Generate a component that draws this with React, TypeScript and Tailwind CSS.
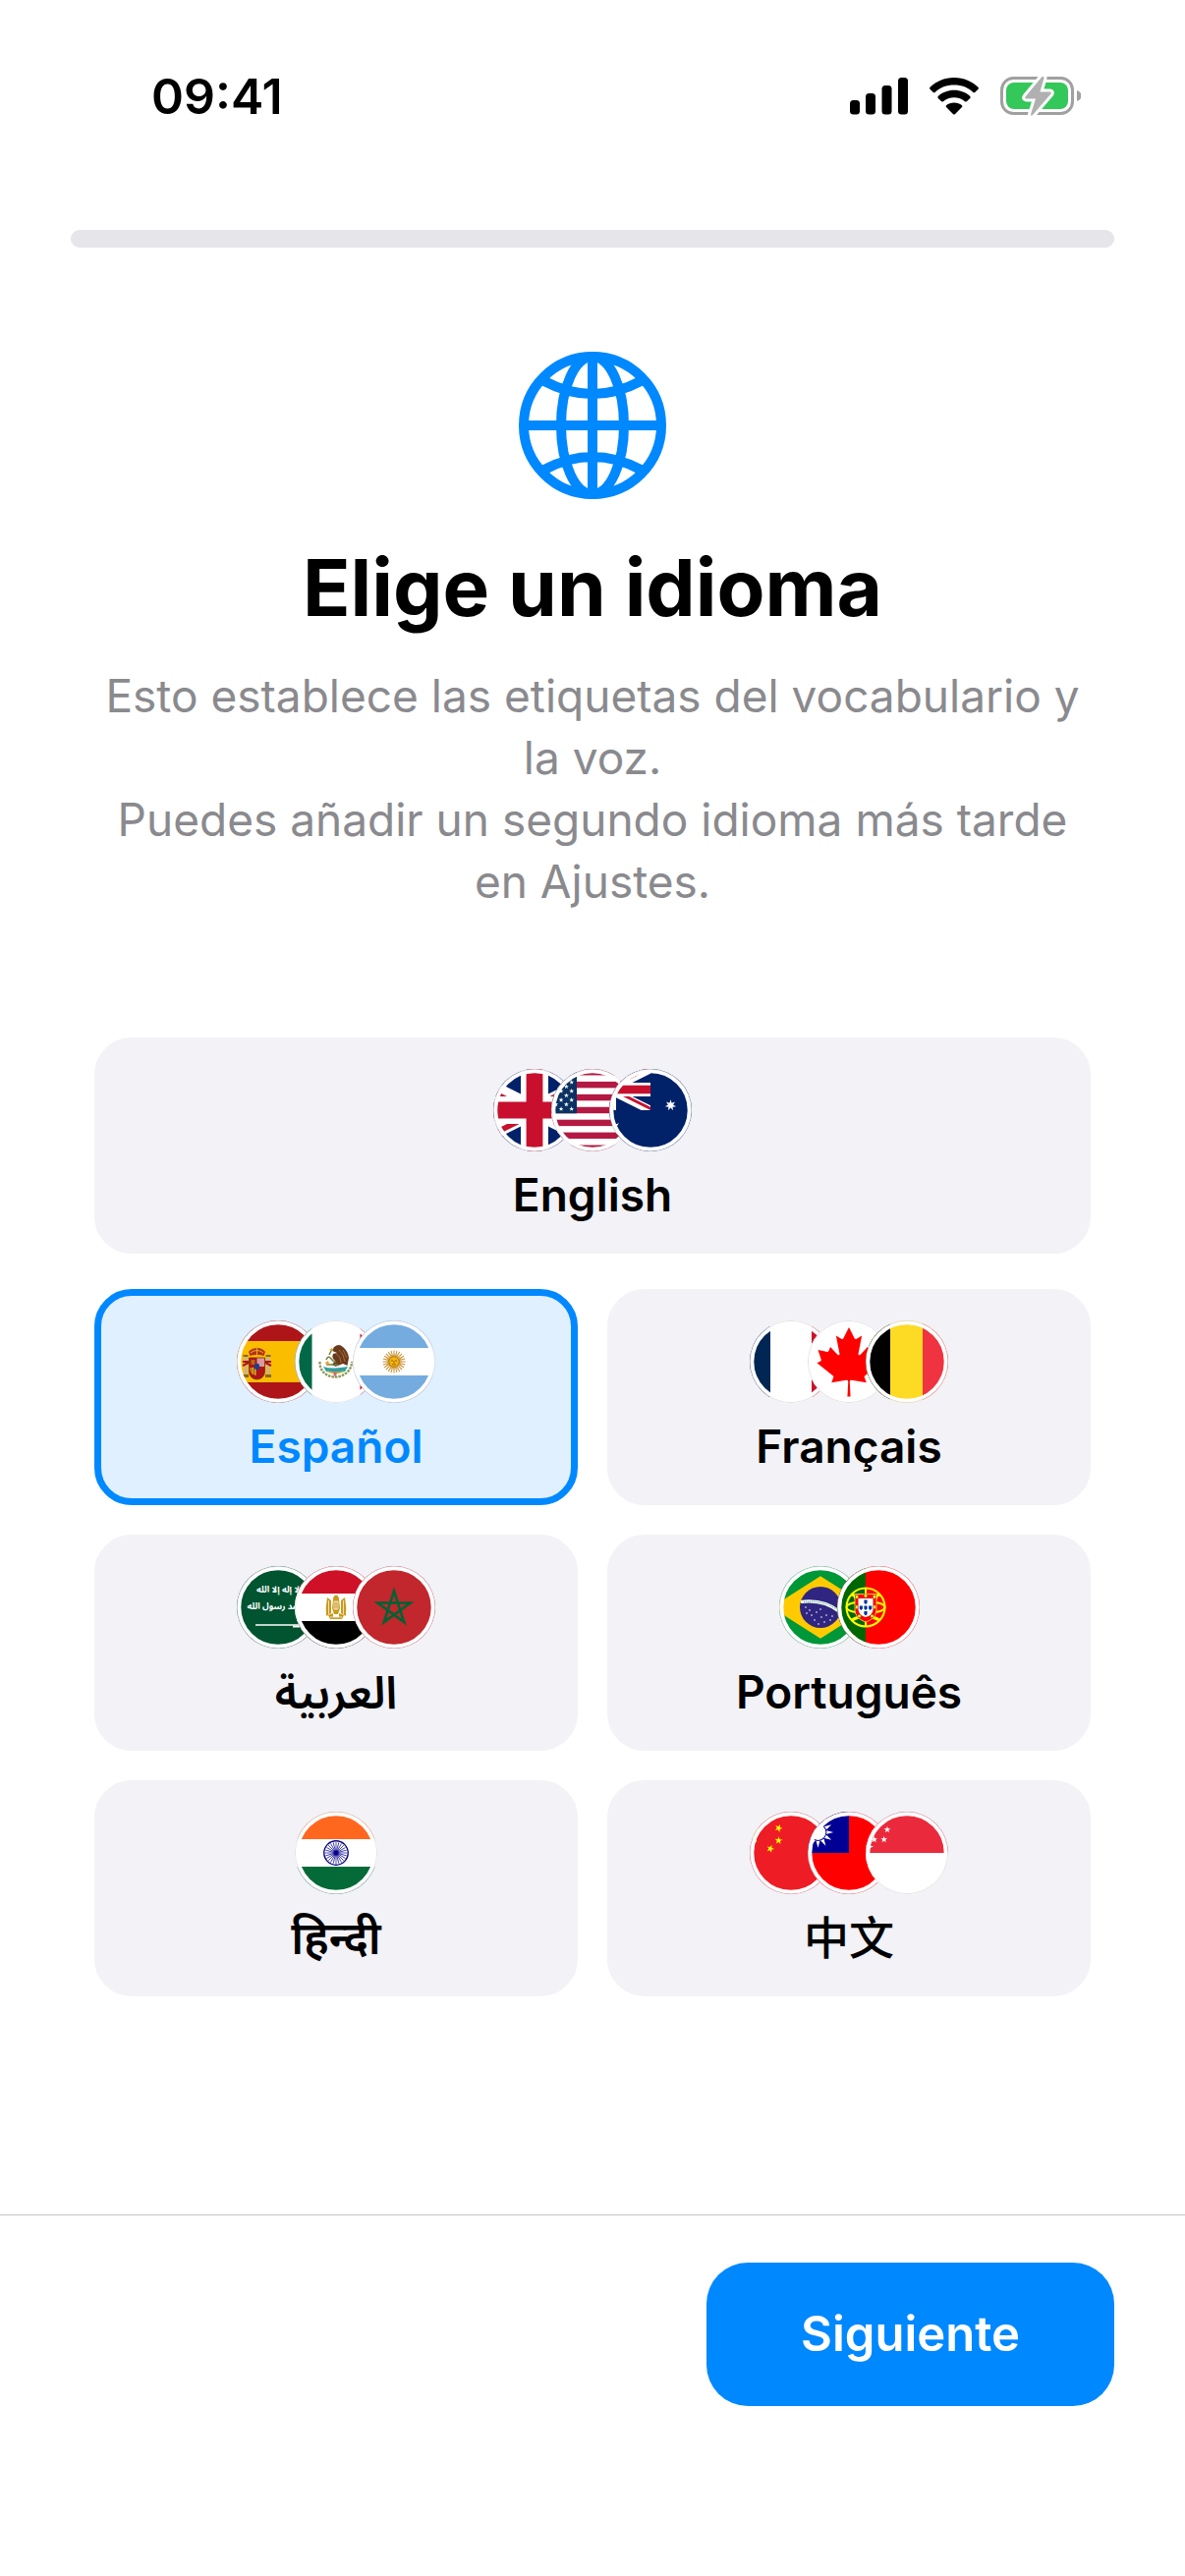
import { useState } from "react";
import type { ReactNode } from "react";

interface Language {
  id: string;
  label: string;
  flags: FlagName[];
  rtl?: boolean;
}

// n-pointed star, first point straight up (plus rot degrees)
function star(cx: number, cy: number, r: number, inner = 0.382, n = 5, rot = 0) {
  const pts: string[] = [];
  for (let i = 0; i < n * 2; i++) {
    const a = (Math.PI / n) * i + ((rot - 90) * Math.PI) / 180;
    const d = i % 2 ? r * inner : r;
    pts.push(`${(cx + d * Math.cos(a)).toFixed(2)},${(cy + d * Math.sin(a)).toFixed(2)}`);
  }
  return pts.join(" ");
}

const range = (n: number) => Array.from({ length: n }, (_, i) => i);

// Union Jack on a 60x30 grid
function UnionJack() {
  return (
    <>
      <path fill="#012169" d="M0 0h60v30H0z" />
      <path stroke="#fff" strokeWidth="6" d="m0 0 60 30M60 0 0 30" />
      <path
        fill="#c8102e"
        d="M0 0l20 10h-4.500L0 2.240zM60 0L40 10h-4.500L55.500 0zM60 30L40 20h4.500L60 27.760zM0 30l20-10h4.500L4.500 30z"
      />
      <path stroke="#fff" strokeWidth="10" d="M30 0v30M0 15h60" />
      <path stroke="#c8102e" strokeWidth="6" d="M30 0v30M0 15h60" />
    </>
  );
}

// Every flag is drawn on an 84x84 canvas, 84 being the full flag height
const flagArt = {
  gb: (
    <g transform="translate(-42 0) scale(2.8)">
      <UnionJack />
    </g>
  ),
  us: (
    <>
      <path fill="#fff" d="M0 0h84v84H0z" />
      {range(7).map((i) => (
        <rect key={i} y={i * 12.92} width="84" height="6.46" fill="#b31942" />
      ))}
      <path fill="#0a3161" d="M0 0h26v45.2H0z" />
      {range(9).map((row) =>
        range(row % 2 ? 5 : 6).map((col) => (
          <polygon
            key={`${row}-${col}`}
            fill="#fff"
            points={star(-32.5 + (row % 2 ? 5.32 : 0) + col * 10.64, 4.52 * (row + 1), 2.6)}
          />
        ))
      )}
    </>
  ),
  au: (
    <>
      <path fill="#012169" d="M0 0h84v84H0z" />
      <svg x="-42" y="0" width="84" height="42" viewBox="0 0 60 30">
        <UnionJack />
      </svg>
      <polygon fill="#fff" points={star(0, 63, 12.6, 0.45, 7)} />
      <polygon fill="#fff" points={star(62.5, 37, 5.8, 0.45, 7)} />
    </>
  ),
  es: (
    <>
      <path fill="#ad1519" d="M0 0h84v84H0z" />
      <path fill="#fabd00" d="M0 21h84v42H0z" />
      <path fill="#c8b1a0" d="M7.500 37h3v18h-3zM30.500 37h3v18h-3z" />
      <path stroke="#ad1519" strokeWidth="2" fill="none" d="M6 46l6-3M35 46l-6-3M6 42h6M29 42h6" />
      <path fill="#8a6a10" d="M6.500 35h5v2h-5zM29.500 35h5v2h-5zM6 55h6v3H6zM29 55h6v3h-6z" />
      <path fill="#ad1519" d="M12.500 38h16v14a8 8 0 0 1-16 0z" />
      <path fill="#d99a9f" d="M20.500 38h8v9h-8z" />
      <path fill="#e8b020" d="M13.500 48h6v8q-6-1-6-6z" />
      <path fill="none" stroke="#7d2a12" strokeWidth=".8" d="M12.500 38h16v14a8 8 0 0 1-16 0zM15 48v7M17.500 48v8" />
      <path fill="#b36a10" d="M14.500 40h4v5h-4z" />
      <ellipse cx="20.500" cy="47" rx="2.700" ry="3.200" fill="#1d3f8f" />
      <path fill="#b5321a" d="M13.500 36l-1.500-4q3-4 8.500-4t8.500 4l-1.500 4q-7-2-14 0z" />
      <path stroke="#e8b020" strokeWidth="1" fill="none" d="M20.500 26v9M14 33q6.500-5 13 0" />
    </>
  ),
  mx: (
    <>
      <path fill="#fff" d="M0 0h84v84H0z" />
      <path fill="#006847" d="M0 0h17.500v84H0z" />
      <path fill="#ce1126" d="M66.500 0H84v84H66.500z" />
      <path fill="none" stroke="#8b9a56" strokeWidth="2.400" strokeDasharray="2.500 1" d="M25.500 42C25 52 33 57.500 41 57.500S58 52 58 42" />
      <path fill="#2f9fa0" d="M29 47q6 2 12 1.500T54 47l-3 5q-9 3-19 0z" />
      <path fill="#d8b13a" d="M33 51q9 3 17 0l-1.500 2q-7 2.500-14 0z" />
      <path fill="#6b3a1c" d="M40 27q5-4 9 0 5 4 6 11l-1.500 8-4.500-2-5 2q-3 2-6-1l3-4q-4-3-2-7l4-1-5-2z" />
      <path fill="none" stroke="#a87443" strokeWidth=".9" d="M45 30q5 4 6 12M42 34q5 3 5 9M49 30l4 8" />
      <path fill="none" stroke="#6f7f3c" strokeWidth="1.500" d="M32 40q2-5 5-1t5 3M32 45h12M35 35l3-6" />
      <path fill="#cf6b73" d="M39 54l2-2.500 2 2.500-2 4z" />
      <path fill="#e0a52c" d="M31 43l3-2 1 3-2 2zM38 28l-3 2 4 1z" />
    </>
  ),
  ar: (
    <>
      <path fill="#74acdf" d="M0 0h84v84H0z" />
      <path fill="#fff" d="M0 28h84v28H0z" />
      <g fill="none" stroke="#c98f35" strokeWidth="1">
        {range(24).map((i) => (
          <path key={i} transform={`rotate(${i * 15} 42 42)`} d="M42 30.500v7" />
        ))}
      </g>
      <polygon fill="#dda23a" points={star(42, 42, 9, 0.6, 16)} />
      <circle cx="42" cy="42" r="5.200" fill="#f6b40e" stroke="#85590f" strokeWidth=".6" />
      <path stroke="#85590f" strokeWidth=".8" fill="none" d="M39 41h2M43 41h2M42 41v2.500M40 44.500q2 1 4 0" />
    </>
  ),
  fr: (
    <>
      <path fill="#fff" d="M0 0h84v84H0z" />
      <path fill="#002654" d="M0 0h21v84H0z" />
      <path fill="#ce1126" d="M63 0h21v84H63z" />
    </>
  ),
  ca: (
    <>
      <path fill="#fff" d="M0 0h84v84H0z" />
      <path
        fill="#f00"
        transform="translate(42 42) scale(.0175)"
        d="m-90 2030 45-863a95 95 0 0 0-111-98l-859 151 116-320a65 65 0 0 0-20-73l-941-762 212-99a65 65 0 0 0 34-79l-186-572 542 115a65 65 0 0 0 73-38l105-247 423 454a65 65 0 0 0 111-57l-204-1052 327 189a65 65 0 0 0 91-27l332-652 332 652a65 65 0 0 0 91 27l327-189-204 1052a65 65 0 0 0 111 57l423-454 105 247a65 65 0 0 0 73 38l542-115-186 572a65 65 0 0 0 34 79l212 99-941 762a65 65 0 0 0-20 73l116 320-859-151a95 95 0 0 0-111 98l45 863z"
      />
    </>
  ),
  be: (
    <>
      <path fill="#fdda24" d="M0 0h84v84H0z" />
      <path d="M0 0h25v84H0z" />
      <path fill="#ef3340" d="M58 0h26v84H58z" />
    </>
  ),
  sa: (
    <>
      <path fill="#005430" d="M0 0h84v84H0z" />
      <g fill="#fff" fontFamily="'Noto Sans Arabic', 'DejaVu Sans', sans-serif" fontSize="9" fontWeight="700" textAnchor="middle">
        <text x="42" y="27">لا إله إلا الله</text>
        <text x="42" y="44">محمد رسول الله</text>
      </g>
      <path stroke="#fff" strokeWidth="1.500" d="M19 60h46" />
      <path stroke="#fff" strokeWidth="2" d="M57 61.500h6l1-2" fill="none" />
    </>
  ),
  eg: (
    <>
      <path fill="#fff" d="M0 0h84v84H0z" />
      <path fill="#ce1126" d="M0 0h84v28H0z" />
      <path d="M0 56h84v28H0z" />
      <g fill="#c99a1c">
        <path d="M33 32l4 3v13l-5 3q-1-9 1-19zM51 32l-4 3v13l5 3q1-9-1-19z" />
        <path d="M39 34q0-4 3-4.500 3 .5 3 4.500l1 9-2 6h-4l-2-6z" />
        <path d="M34 50l5-2v4h6v-4l5 2-2 4H36z" />
      </g>
      <path stroke="#fff" strokeWidth=".7" fill="none" d="M34.500 35v14M49.500 35v14M40 36v8h4v-8zM42 36v8M36 52h12" />
    </>
  ),
  ma: (
    <>
      <path fill="#c1272d" d="M0 0h84v84H0z" />
      <path
        fill="none"
        stroke="#006233"
        strokeWidth="2.600"
        strokeMiterlimit="10"
        d="M42 25.500L52.200 57 25.400 37.500h33.200L31.800 57z"
      />
    </>
  ),
  br: (
    <>
      <path fill="#009739" d="M0 0h84v84H0z" />
      <path fill="#ffcb00" d="M-7.800 42L42 10.200 91.800 42 42 73.800z" />
      <circle cx="42" cy="42" r="21" fill="#302681" />
      <path fill="none" stroke="#fff" strokeWidth="3.200" d="M22 36.500q23-3 39.500 10" />
      <path fill="none" stroke="#009739" strokeWidth="1" strokeDasharray="1 1" d="M25 36.500q20-2 35 8.500" />
      <g fill="#fff">
        {[[28, 48], [27, 42], [33, 50], [38, 47], [36, 55], [42, 44], [43, 52], [48, 50], [46, 57], [52, 55], [54, 51], [31, 45], [50, 40], [40, 59]].map(([x, y]) => (
          <circle key={`${x}-${y}`} cx={x} cy={y} r=".8" />
        ))}
      </g>
    </>
  ),
  pt: (
    <>
      <path fill="#f00" d="M0 0h84v84H0z" />
      <path fill="#060" d="M0 0h29v84H0z" />
      <g fill="none" stroke="#ff0" strokeWidth="2">
        <circle cx="29" cy="42" r="19.500" />
        <ellipse cx="29" cy="42" rx="19.500" ry="6" />
        <path d="M14 29q15 9 30 0M14 55q15-9 30 0M29 22v40M16 28q10 22 26 27M42 28q-10 22-26 27" />
      </g>
      <path fill="#f00" stroke="#ffe94d" strokeWidth=".8" d="M18 28.500h22V44c0 7-5 11-11 13-6-2-11-6-11-13z" />
      <g fill="#ffe94d" stroke="#7a5a00" strokeWidth=".5">
        <path d="M18.500 29.500h3v3.500h-3zM27.500 28.500h3v3.500h-3zM36.500 29.500h3v3.500h-3zM18.500 40h2.500v3.500h-2.500zM37 40h2.500v3.500H37zM21 49.500h3v3h-3zM34 49.500h3v3h-3z" />
      </g>
      <path fill="#fff" d="M21.500 33h15v10.500c0 5-3.500 7.500-7.500 8.500-4-1-7.500-3.500-7.500-8.500z" />
      <path fill="#039" d="M27.400 34.500h3.200v3l-1.600 1.500-1.600-1.500zM27.400 40.500h3.200v3L29 45l-1.600-1.500zM27.400 46h3.200v3L29 50.500 27.400 49zM22.700 40.500h3.200v3L24.300 45l-1.600-1.500zM32.100 40.500h3.200v3L33.700 45l-1.600-1.500z" />
    </>
  ),
  in: (
    <>
      <path fill="#fff" d="M0 0h84v84H0z" />
      <path fill="#ff671f" d="M0 0h84v28H0z" />
      <path fill="#046a38" d="M0 56h84v28H0z" />
      <g stroke="#06038d" fill="none">
        <circle cx="42" cy="42" r="12.200" strokeWidth="1.400" />
        {range(12).map((i) => (
          <path key={i} strokeWidth=".7" transform={`rotate(${i * 15} 42 42)`} d="M42 31v22" />
        ))}
      </g>
      <circle cx="42" cy="42" r="2.400" fill="#06038d" />
    </>
  ),
  cn: (
    <>
      <path fill="#ee1c25" d="M0 0h84v84H0z" />
      <g fill="#ff0">
        <polygon points={star(0, 21, 12.6)} />
        <polygon points={star(29.4, 16.8, 4.2, 0.382, 5, 22)} />
        <polygon points={star(29.4, 29.4, 4.2, 0.382, 5, 5)} />
        <polygon points={star(21, 37.8, 4.2, 0.382, 5, 20)} />
      </g>
    </>
  ),
  tw: (
    <>
      <path fill="#fe0000" d="M0 0h84v84H0z" />
      <path fill="#000095" d="M0 0h42v42H0z" />
      <polygon fill="#fff" points={star(10.5, 21, 15.75, 0.52, 12)} />
      <circle cx="10.500" cy="21" r="8.900" fill="#000095" />
      <circle cx="10.500" cy="21" r="7.900" fill="#fff" />
    </>
  ),
  sg: (
    <>
      <path fill="#fff" d="M0 0h84v84H0z" />
      <path fill="#ea2a3c" d="M0 0h84v42H0z" />
      <g fill="#fff">
        <polygon points={star(22, 18.3, 3.6)} />
        <polygon points={star(18.7, 28.3, 3.6)} />
        <polygon points={star(8.7, 28.3, 3.6)} />
        <path d="M3 34l5 1.500-5 2z" />
      </g>
    </>
  ),
} satisfies Record<string, ReactNode>;

type FlagName = keyof typeof flagArt;

const languages: Language[] = [
  { id: "en", label: "English", flags: ["gb", "us", "au"] },
  { id: "es", label: "Español", flags: ["es", "mx", "ar"] },
  { id: "fr", label: "Français", flags: ["fr", "ca", "be"] },
  { id: "ar", label: "العربية", flags: ["sa", "eg", "ma"], rtl: true },
  { id: "pt", label: "Português", flags: ["br", "pt"] },
  { id: "hi", label: "हिन्दी", flags: ["in"] },
  { id: "zh", label: "中文", flags: ["cn", "tw", "sg"] },
];

function Flag({ name }: { name: FlagName }) {
  return (
    <svg
      viewBox="0 0 84 84"
      aria-hidden="true"
      className="-ml-[25px] size-[84px] rounded-full bg-white first:ml-0"
    >
      {flagArt[name]}
      <circle cx="42" cy="42" r="39.700" fill="none" stroke="#fff" strokeWidth="4" />
      <circle cx="42" cy="42" r="41.700" fill="none" stroke="#d6d6da" strokeWidth=".8" />
    </svg>
  );
}

function StatusBar() {
  return (
    <div className="flex items-center justify-between pr-[106px] pl-[154px] pt-[68px]">
      <span className="text-[50px] leading-[60px] font-semibold">09:41</span>
      <div className="flex items-center gap-[22px]">
        <svg viewBox="0 0 59 38" className="h-[38px] w-[59px]" aria-hidden="true">
          <rect x="0" y="23" width="10" height="14.500" rx="3.500" />
          <rect x="16" y="16" width="10" height="21.500" rx="3.500" />
          <rect x="32.500" y="8" width="10" height="29.500" rx="3.500" />
          <rect x="49" y="0" width="10" height="37.500" rx="3.500" />
        </svg>
        <svg viewBox="0 0 50 38" className="h-[38px] w-[50px]" aria-hidden="true">
          <path d="M25 0C35 0 43.500 4 49.500 9.800q.8 1 0 1.900l-3.300 3.200q-.9.800-1.800 0C39.500 10 32.500 7.500 25 7.500S10.500 10 5.600 14.900q-.9.800-1.800 0L.5 11.700q-.8-.9 0-1.900C6.500 4 15 0 25 0z" />
          <path d="M25 12.800c6.300 0 12 2.300 16.300 6.200q.8 1 0 1.900l-3.500 3.300q-.9.800-1.800 0C33 21.700 29.200 20.200 25 20.200s-8 1.500-11 4q-.9.800-1.800 0l-3.500-3.300q-.8-.9 0-1.900C13 15.100 18.700 12.800 25 12.800z" />
          <path d="M25 25.500c3 0 5.800 1 8 2.700q.8.900 0 1.800l-7.100 7.200q-.9.800-1.800 0L17 30q-.8-.9 0-1.800c2.200-1.700 5-2.700 8-2.700z" />
        </svg>
        <svg viewBox="0 0 82 42" className="h-[42px] w-[82px]" aria-hidden="true">
          <rect x="1.500" y="2.500" width="72" height="36" rx="12" fill="none" stroke="#a0a0a0" strokeWidth="3" />
          <path fill="#a0a0a0" d="M78 15q4.500 1.500 4.500 5.500t-4.500 5.500z" />
          <rect x="6" y="7" width="63" height="27" rx="8" fill="#34c759" />
          <path
            fill="#b0b0b0"
            stroke="#fff"
            strokeWidth="6"
            strokeLinejoin="round"
            paintOrder="stroke"
            d="M42.500 1L25.500 21.500q-1 2 1 2h9.500l-5 16q0 2 2 .5L51.500 18.500q1-2-1-2H40.500l4-14q0-2.500-2-1.500z"
          />
        </svg>
      </div>
    </div>
  );
}

function Globe() {
  return (
    <svg
      viewBox="0 0 150 150"
      fill="none"
      stroke="#08f"
      strokeWidth="10"
      strokeLinecap="round"
      className="size-[150px]"
      aria-hidden="true"
    >
      <circle cx="75" cy="75" r="70" />
      <ellipse cx="75" cy="75" rx="32" ry="70" />
      <path d="M75 9v132M9 75h132M26 30q49 26 98 0M26 120q49-26 98 0" />
    </svg>
  );
}

interface LanguageCardProps {
  language: Language;
  selected: boolean;
  onSelect: () => void;
}

function LanguageCard({ language, selected, onSelect }: LanguageCardProps) {
  return (
    <button
      type="button"
      aria-pressed={selected}
      onClick={onSelect}
      className={`flex h-[220px] flex-col items-center gap-3 rounded-[38px] border-[7px] pt-[25px] text-[46px] leading-[64px] font-semibold first:col-span-2 first:mb-[6px] ${
        selected ? "border-[#08f] bg-[#e0f0ff] text-[#08f]" : "border-[#f2f2f7] bg-[#f2f2f7] text-black"
      }`}
    >
      <span className="flex">
        {language.flags.map((flag) => (
          <Flag key={flag} name={flag} />
        ))}
      </span>
      <span
        lang={language.id}
        dir={language.rtl ? "rtl" : "ltr"}
        className={language.id === "zh" ? "font-medium" : undefined}
      >
        {language.label}
      </span>
    </button>
  );
}

export default function App() {
  const [selected, setSelected] = useState("es");

  return (
    <div className="flex min-h-screen w-full flex-col bg-white font-[Inter,'Noto_Sans_Arabic','Noto_Sans_Devanagari','Noto_Sans','Noto_Sans_CJK_SC',sans-serif] text-black">
      <StatusBar />

      <div className="mx-[72px] mt-[106px] h-[18px] rounded-full bg-[#e5e5ea]" />

      <main className="flex flex-1 flex-col px-24">
        <header className="flex flex-col items-center pt-[106px] text-center">
          <Globe />
          <h1 className="mt-10 text-[80px] leading-[100px] font-bold">Elige un idioma</h1>
          <p className="mt-[29px] text-[46px] leading-[63px] text-[#8a8a8e]">
            Esto establece las etiquetas del vocabulario y la voz.
            <br />
            Puedes añadir un segundo idioma más tarde en Ajustes.
          </p>
        </header>

        <div className="mt-[127px] grid grid-cols-2 gap-[30px]">
          {languages.map((language) => (
            <LanguageCard
              key={language.id}
              language={language}
              selected={selected === language.id}
              onSelect={() => setSelected(language.id)}
            />
          ))}
        </div>
      </main>

      <footer className="flex justify-end border-t border-[#c6c6c8] px-[72px] pt-12 pb-[173px]">
        <button
          type="button"
          className="h-[146px] rounded-[42px] bg-[#08f] px-24 text-[49px] leading-[60px] font-semibold text-white"
        >
          Siguiente
        </button>
      </footer>
    </div>
  );
}
